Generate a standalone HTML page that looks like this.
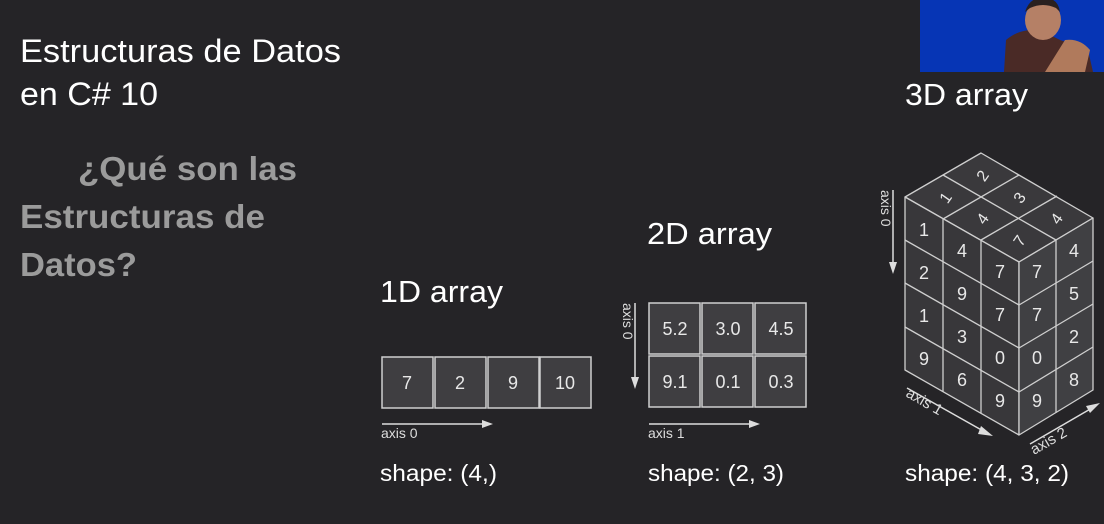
<!DOCTYPE html>
<html><head><meta charset="utf-8"><style>
html,body{margin:0;padding:0;background:#252427;width:1104px;height:524px;overflow:hidden}
svg{display:block}
text{font-family:"Liberation Sans",Arial,sans-serif}
</style></head><body>
<svg width="1104" height="524" viewBox="0 0 1104 524" xmlns="http://www.w3.org/2000/svg">
<rect width="1104" height="524" fill="#252427"/>
<!-- webcam -->
<rect x="920" y="0" width="184" height="72" fill="#0635b5"/>
<path d="M1004 72 L1006 40 Q1020 28 1040 30 L1060 40 Q1075 45 1088 50 L1093 72 Z" fill="#4a2a26"/>
<ellipse cx="1043" cy="20" rx="18" ry="20" fill="#b58066"/>
<path d="M1025 12 Q1030 -4 1045 -2 Q1058 -2 1060 12 L1056 8 Q1043 2 1030 8Z" fill="#2a2020"/>
<path d="M1045 72 L1065 40 Q1080 38 1090 50 L1085 72Z" fill="#b07a5c"/>
<!-- titles -->
<text x="20" y="62" font-size="32" fill="#ffffff" textLength="321" lengthAdjust="spacingAndGlyphs">Estructuras de Datos</text>
<text x="20" y="105" font-size="32" fill="#ffffff" textLength="138" lengthAdjust="spacingAndGlyphs">en C# 10</text>
<g font-size="33" font-weight="bold" fill="#9b9b9b">
<text x="78" y="180" textLength="219" lengthAdjust="spacingAndGlyphs">¿Qué son las</text>
<text x="20" y="228" textLength="245" lengthAdjust="spacingAndGlyphs">Estructuras de</text>
<text x="20" y="276" textLength="117" lengthAdjust="spacingAndGlyphs">Datos?</text>
</g>
<g fill="#ffffff" font-size="31">
<text x="380" y="302" textLength="123" lengthAdjust="spacingAndGlyphs">1D array</text>
<text x="647" y="244" textLength="125" lengthAdjust="spacingAndGlyphs">2D array</text>
<text x="905" y="105" textLength="123" lengthAdjust="spacingAndGlyphs">3D array</text>
</g>
<g fill="#ffffff" font-size="23">
<text x="380" y="481" textLength="117" lengthAdjust="spacingAndGlyphs">shape: (4,)</text>
<text x="648" y="481" textLength="136" lengthAdjust="spacingAndGlyphs">shape: (2, 3)</text>
<text x="905" y="481" textLength="164" lengthAdjust="spacingAndGlyphs">shape: (4, 3, 2)</text>
</g>
<!-- 1D -->
<g stroke="#cfcfcf" stroke-width="1.5" fill="#3f3e41">
<rect x="382" y="357" width="51" height="51"/><rect x="435" y="357" width="51" height="51"/>
<rect x="488" y="357" width="51" height="51"/><rect x="540" y="357" width="51" height="51"/>
</g>
<g fill="#e8e8e8" font-size="18" text-anchor="middle">
<text x="407" y="389">7</text><text x="460" y="389">2</text><text x="513" y="389">9</text><text x="565" y="389">10</text>
</g>
<line x1="382" y1="424" x2="485" y2="424" stroke="#ddd" stroke-width="1.5"/><path d="M482 420 L493 424 L482 428Z" fill="#ddd"/>
<text x="381" y="438" font-size="14" fill="#ddd">axis 0</text>
<!-- 2D -->
<g stroke="#cfcfcf" stroke-width="1.5" fill="#3f3e41">
<rect x="649" y="303" width="51" height="51"/><rect x="702" y="303" width="51" height="51"/><rect x="755" y="303" width="51" height="51"/>
<rect x="649" y="356" width="51" height="51"/><rect x="702" y="356" width="51" height="51"/><rect x="755" y="356" width="51" height="51"/>
</g>
<g fill="#e8e8e8" font-size="18" text-anchor="middle">
<text x="675" y="335">5.2</text><text x="728" y="335">3.0</text><text x="781" y="335">4.5</text>
<text x="675" y="388">9.1</text><text x="728" y="388">0.1</text><text x="781" y="388">0.3</text>
</g>
<line x1="635" y1="303" x2="635" y2="380" stroke="#ddd" stroke-width="1.5"/><path d="M631 377 L635 389 L639 377Z" fill="#ddd"/>
<text transform="translate(623,303) rotate(90)" font-size="14" fill="#ddd">axis 0</text>
<line x1="649" y1="424" x2="752" y2="424" stroke="#ddd" stroke-width="1.5"/><path d="M749 420 L760 424 L749 428Z" fill="#ddd"/>
<text x="648" y="438" font-size="14" fill="#ddd">axis 1</text>
<!-- 3D -->
<g stroke="#cfcfcf" stroke-width="1.3" stroke-linejoin="round">
<path d="M905 197 L981 153 L1093 218 L1019 262Z" fill="#3a393c"/>
<path d="M905 197 L1019 262 L1019 435 L905 370Z" fill="#38373a"/>
<path d="M1019 262 L1093 218 L1093 390 L1019 435Z" fill="#404043"/>
<g fill="none">
<path d="M943 175 L1056 240 M943 219 L1019 175 M981 240 L1057 196"/>
<path d="M943 219 L943 392 M981 240 L981 413"/>
<path d="M905 240 L1019 305 M905 283 L1019 348 M905 327 L1019 392"/>
<path d="M1056 240 L1056 413"/>
<path d="M1019 305 L1093 261 M1019 348 L1093 304 M1019 392 L1093 347"/>
</g>
</g>
<g fill="#e8e8e8" font-size="18" text-anchor="middle" font-family="DejaVu Sans,sans-serif">
<text x="924" y="236">1</text><text x="924" y="279">2</text><text x="924" y="322">1</text><text x="924" y="365">9</text>
<text x="962" y="257">4</text><text x="962" y="300">9</text><text x="962" y="343">3</text><text x="962" y="386">6</text>
<text x="1000" y="278">7</text><text x="1000" y="321">7</text><text x="1000" y="364">0</text><text x="1000" y="407">9</text>
<text x="1037" y="278">7</text><text x="1037" y="321">7</text><text x="1037" y="364">0</text><text x="1037" y="407">9</text>
<text x="1074" y="257">4</text><text x="1074" y="300">5</text><text x="1074" y="343">2</text><text x="1074" y="386">8</text>
<text x="946" y="203" font-size="16" transform="rotate(-55 946 198)">1</text>
<text x="983" y="181" font-size="16" transform="rotate(-55 983 176)">2</text>
<text x="1020" y="203" font-size="16" transform="rotate(-55 1020 198)">3</text>
<text x="983" y="224" font-size="16" transform="rotate(-55 983 219)">4</text>
<text x="1057" y="224" font-size="16" transform="rotate(-55 1057 219)">4</text>
<text x="1020" y="246" font-size="16" transform="rotate(-55 1020 241)">7</text>
</g>
<line x1="893" y1="190" x2="893" y2="265" stroke="#ddd" stroke-width="1.5"/><path d="M889 262 L893 274 L897 262Z" fill="#ddd"/>
<text transform="translate(881,190) rotate(90)" font-size="14" fill="#ddd">axis 0</text>
<line x1="907" y1="388" x2="985" y2="432" stroke="#ddd" stroke-width="1.5"/><path d="M981 426 L993 436 L978 434Z" fill="#ddd"/>
<text transform="translate(905,396) rotate(30)" font-size="15" fill="#ddd">axis 1</text>
<line x1="1030" y1="444" x2="1092" y2="408" stroke="#ddd" stroke-width="1.5"/><path d="M1086 406 L1100 403 L1090 413Z" fill="#ddd"/>
<text transform="translate(1034,455) rotate(-30)" font-size="15" fill="#ddd">axis 2</text>
</svg>
</body></html>
